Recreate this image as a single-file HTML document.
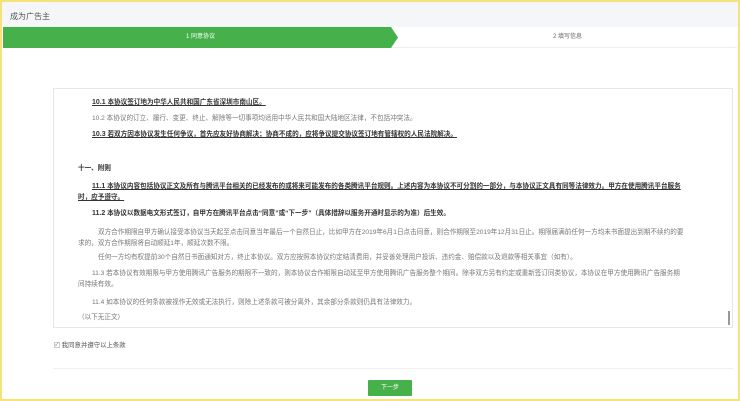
<!DOCTYPE html><html><head><meta charset="utf-8"><style>
*{margin:0;padding:0;box-sizing:border-box}
body{width:740px;height:401px;background:#fff;font-family:"Liberation Sans","Noto Sans CJK SC",sans-serif;position:relative;overflow:hidden;color:#333}
.frame{position:absolute;left:0;top:0;width:740px;height:401px;border:2px solid #f7e27a}
.hdr{position:absolute;left:2px;top:2px;width:736px;height:25px;background:#f5f6f7;font-size:8px;color:#555;padding:9px 0 0 8px}
.steps{position:absolute;left:3px;top:27px;width:734px;height:21px;border-bottom:1px solid #eee}
.g{position:absolute;left:0;top:0;width:395px;height:21px;background:#46b14b;clip-path:polygon(0 0,388px 0,395px 10.5px,388px 21px,0 21px);color:#fff;font-size:6px;text-align:center;line-height:21px}
.s2{position:absolute;left:395px;top:0;width:339px;line-height:21px;text-align:center;font-size:6px;color:#666}
.box{position:absolute;left:53px;top:88px;width:680px;height:240px;border:1px solid #e6e6e6;overflow:hidden}
.sb{position:absolute;right:2px;top:222px;width:2px;height:14px;background:#999}
p{position:absolute;font-size:6.6px;white-space:nowrap;color:#777}
p.b{font-weight:bold;color:#333;text-decoration:underline}
p.k{font-weight:bold;color:#333}
.chk{position:absolute;left:54px;top:340px;font-size:6.4px;color:#555}
.chk span{display:inline-block;width:6px;height:6px;border:1px solid #ccc;font-size:5px;line-height:5px;vertical-align:middle}
.hr{position:absolute;left:53px;top:368px;width:680px;height:1px;background:#f0f0f0}
.btn{position:absolute;left:368px;top:380px;width:44px;height:16px;background:#46b14b;color:#fff;font-size:6px;text-align:center;line-height:16px;border-radius:1px}
</style></head><body>
<div class="hdr">成为广告主</div>
<div class="steps"><div class="g">1 同意协议</div><div class="s2">2 填写信息</div></div>
<div class="box">
<p class="b" style="left:38px;top:7px"><b style="font-size:7px">10.1</b> 本协议签订地为中华人民共和国广东省深圳市南山区。</p>
<p style="left:38px;top:23px">10.2 本协议的订立、履行、变更、终止、解除等一切事项均适用中华人民共和国大陆地区法律，不包括冲突法。</p>
<p class="b" style="left:38px;top:39px"><b style="font-size:7px">10.3</b> 若双方因本协议发生任何争议，首先应友好协商解决；协商不成的，应将争议提交协议签订地有管辖权的人民法院解决。</p>
<p class="k" style="left:24px;top:73px">十一、附则</p>
<p class="b" style="left:38px;top:91px"><b style="font-size:7px">11.1</b> 本协议内容包括协议正文及所有与腾讯平台相关的已经发布的或将来可能发布的各类腾讯平台规则。上述内容为本协议不可分割的一部分，与本协议正文具有同等法律效力。甲方在使用腾讯平台服务</p>
<p class="b" style="left:24px;top:102px">时，应予遵守。</p>
<p class="k" style="left:38px;top:118px"><span style="font-size:7px">11.2</span> 本协议以数据电文形式签订，自甲方在腾讯平台点击“同意”或“下一步”（具体措辞以服务开通时显示的为准）后生效。</p>
<p style="left:44px;top:137px">双方合作期限自甲方确认接受本协议当天起至点击同意当年最后一个自然日止，比如甲方在2019年6月1日点击同意，则合作期限至2019年12月31日止。期限届满前任何一方均未书面提出到期不续约的要</p>
<p style="left:24px;top:148px">求的，双方合作期限将自动顺延1年，顺延次数不限。</p>
<p style="left:44px;top:162px">任何一方均有权提前30个自然日书面通知对方，终止本协议。双方应按照本协议约定结清费用，并妥善处理用户投诉、违约金、赔偿款以及退款等相关事宜（如有）。</p>
<p style="left:38px;top:178px">11.3 若本协议有效期限与甲方使用腾讯广告服务的期限不一致的，则本协议合作期限自动延至甲方使用腾讯广告服务整个期间。除非双方另有约定或重新签订同类协议，本协议在甲方使用腾讯广告服务期</p>
<p style="left:24px;top:189px">间持续有效。</p>
<p style="left:38px;top:207px">11.4 如本协议的任何条款被视作无效或无法执行，则除上述条款可被分离外，其余部分条款则仍具有法律效力。</p>
<p style="left:24px;top:222px">（以下无正文）</p>
<div class="sb"></div>
</div>
<div class="chk"><span>✓</span> 我同意并遵守以上条款</div>
<div class="hr"></div>
<div class="btn">下一步</div>
<div class="frame"></div>
</body></html>
